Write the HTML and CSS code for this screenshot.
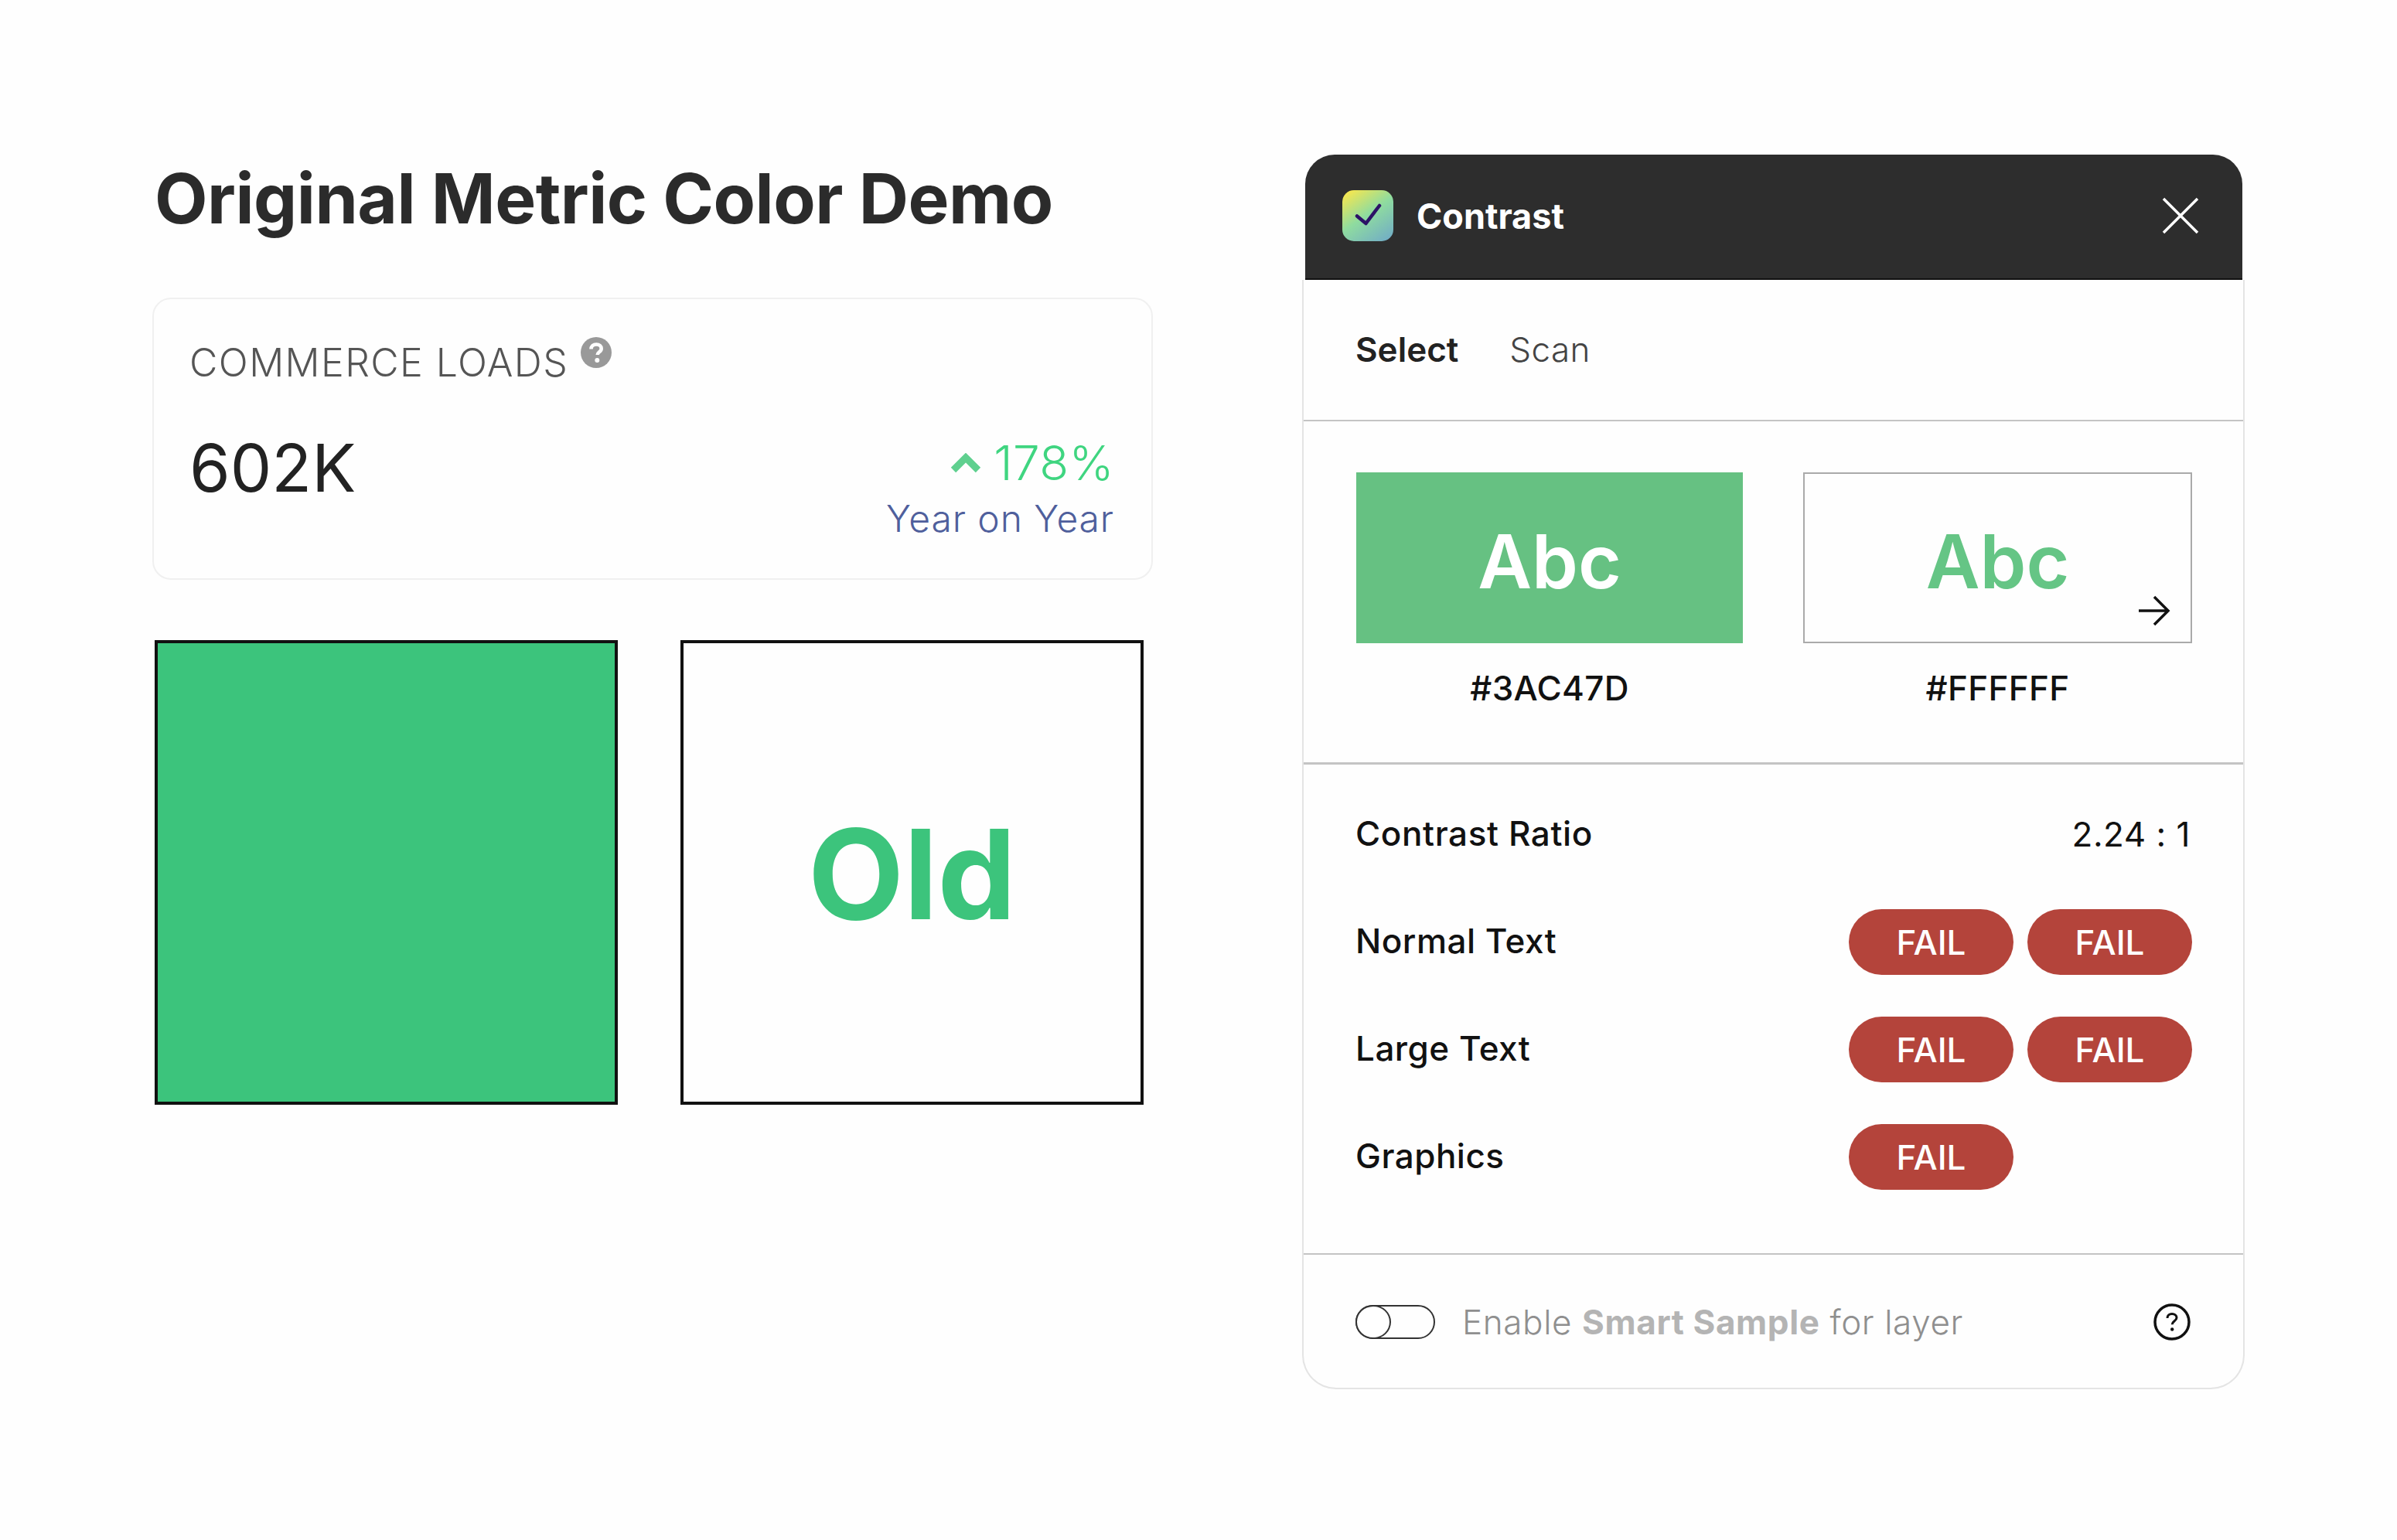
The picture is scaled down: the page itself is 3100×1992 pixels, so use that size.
FILE: index.html
```html
<!DOCTYPE html>
<html lang="en">
<head>
<meta charset="utf-8">
<title>Original Metric Color Demo</title>
<link rel="stylesheet" href="styles.css">
</head>
<body>
<main class="stage">
  <section class="demo">
    <h1 class="title">Original Metric Color Demo</h1>
    <article class="metric">
      <div class="metric-label">
        <span>COMMERCE LOADS</span>
        <svg class="metric-help" viewBox="0 0 40 40" aria-hidden="true"><circle cx="20" cy="20" r="20" fill="#999"/><path d="M13.5 15.5c0-3.800 3-6 6.700-6 3.900 0 6.500 2.200 6.500 5.400 0 4.400-5 4.300-5 8.100" fill="none" stroke="#fff" stroke-width="4.600"/><circle cx="21.300" cy="30" r="3" fill="#fff"/></svg>
      </div>
      <div class="metric-row">
        <div class="metric-value">602K</div>
        <div class="metric-trend">
          <div class="trend-up">
            <svg class="chevron" viewBox="0 0 40 26" aria-hidden="true"><path d="M4 22 20 6l16 16" fill="none" stroke="#5fd08f" stroke-width="9"/></svg>
            <span>178%</span>
          </div>
          <div class="trend-note">Year on Year</div>
        </div>
      </div>
    </article>
    <div class="boxes">
      <div class="box box-fill"></div>
      <div class="box box-text">Old</div>
    </div>
  </section>

  <section class="panel">
    <header class="panel-head">
      <div class="brand">
        <span class="logo"><svg viewBox="0 0 66 66" aria-hidden="true"><path d="M19 33.500 30.500 43 48 20" fill="none" stroke="#2c1266" stroke-width="4.500" stroke-linecap="round" stroke-linejoin="round"/></svg></span>
        <span class="brand-name">Contrast</span>
      </div>
      <svg class="close" viewBox="0 0 48 48" aria-hidden="true"><path d="M2 2 46 46M46 2 2 46" fill="none" stroke="#fff" stroke-width="3.500"/></svg>
    </header>
    <div class="panel-body">
      <nav class="tabs">
        <span class="tab tab-active">Select</span>
        <span class="tab">Scan</span>
      </nav>
      <div class="swatches">
        <figure class="swatch">
          <div class="chip chip-fg">Abc</div>
          <figcaption class="hex">#3AC47D</figcaption>
        </figure>
        <figure class="swatch swatch-bg">
          <div class="chip chip-bg">Abc
            <svg class="arrow" viewBox="0 0 42 40" aria-hidden="true"><path d="M1 20H39M21 2l18 18-18 18" fill="none" stroke="#111" stroke-width="3.500"/></svg>
          </div>
          <figcaption class="hex">#FFFFFF</figcaption>
        </figure>
      </div>
      <div class="results">
        <div class="result result-ratio"><span class="result-name">Contrast Ratio</span><span class="ratio">2.24 : 1</span></div>
        <div class="result"><span class="result-name">Normal Text</span><div class="pills"><span class="pill">FAIL</span><span class="pill">FAIL</span></div></div>
        <div class="result"><span class="result-name">Large Text</span><div class="pills"><span class="pill">FAIL</span><span class="pill">FAIL</span></div></div>
        <div class="result"><span class="result-name">Graphics</span><div class="pills"><span class="pill">FAIL</span></div></div>
      </div>
      <footer class="smart">
        <span class="toggle"><span class="knob"></span></span>
        <span class="smart-text">Enable <b>Smart Sample</b> for layer</span>
        <svg class="help" viewBox="0 0 48 48" aria-hidden="true"><circle cx="24" cy="24" r="22" fill="none" stroke="#111" stroke-width="3.500"/><path d="M18 19c0-3.500 2.600-5.500 6-5.500s6 2 6 5c0 4.200-5.800 4.300-5.800 8.700" fill="none" stroke="#111" stroke-width="3"/><circle cx="24.200" cy="33.500" r="2.200" fill="#111"/></svg>
      </footer>
    </div>
  </section>
</main>
</body>
</html>
```

FILE: styles.css
```css
* { box-sizing: border-box; }
html, body { margin: 0; height: 100%; }
body { background: #fefefe; font-family: Inter, "Liberation Sans", sans-serif; color: #111; }

.stage {
  width: 3100px;
  height: 1992px;
  padding: 200px 197px 0 198px;
  display: flex;
  justify-content: space-between;
  align-items: flex-start;
}

.demo { width: 1293px; }
.title {
  margin: 0;
  height: 185px;
  padding: 1px 0 0 2px;
  font-size: 89px;
  line-height: 112px;
  font-weight: 700;
  letter-spacing: -0.5px;
  color: #2b2b2b;
}

.metric {
  height: 365px;
  margin-left: -1px;
  border: 2px solid #f0f0f0;
  border-radius: 24px;
  padding: 52px 48px 0 46px;
}
.metric-label {
  display: flex;
  align-items: flex-start;
  gap: 16px;
  height: 112px;
  font-size: 50px;
  font-weight: 300;
  line-height: 60px;
  letter-spacing: 1.4px;
  color: #555;
}
.metric-help { width: 40px; height: 40px; flex: none; margin-top: -3px; }
.metric-row { display: flex; justify-content: space-between; align-items: flex-start; }
.metric-value {
  font-size: 85px;
  font-weight: 400;
  line-height: 110px;
  color: #222;
}
.metric-trend { display: flex; flex-direction: column; align-items: flex-end; margin-top: 10px; }
.trend-up {
  display: flex;
  align-items: center;
  gap: 16px;
  font-size: 62px;
  font-weight: 300;
  line-height: 76px;
  letter-spacing: 0.4px;
  color: #3fd580;
}
.chevron { width: 40px; height: 26px; }
.trend-note {
  margin-top: 4px;
  font-size: 48px;
  font-weight: 300;
  line-height: 60px;
  letter-spacing: 0.9px;
  color: #4f5f9c;
}

.boxes { display: flex; gap: 81px; margin: 78px 0 0 2px; }
.box { width: 599px; height: 601px; border: 4px solid #111; }
.box-fill { background: #3cc47c; }
.box-text {
  display: flex;
  align-items: center;
  justify-content: center;
  background: #fefefe;
  padding-top: 4px;
  font-size: 161px;
  font-weight: 700;
  color: #3cc47c;
}

.panel { width: 1219px; display: flex; flex-direction: column; }
.panel-head {
  height: 162px;
  margin: 0 3px 0 4px;
  background: #2d2d2d;
  border-radius: 38px 38px 0 0;
  border-bottom: 2px solid #111;
  padding: 0 56px 2px 48px;
  display: flex;
  align-items: center;
  justify-content: space-between;
}
.brand { display: flex; align-items: center; gap: 30px; }
.logo {
  width: 66px;
  height: 66px;
  border-radius: 15px;
  background: linear-gradient(145deg, #f1e653 8%, #8fdc9f 48%, #6fa9c9 100%);
  display: block;
}
.logo svg { display: block; width: 66px; height: 66px; }
.brand-name { font-size: 45px; font-weight: 700; color: #fff; }
.close { width: 48px; height: 48px; }

.panel-body {
  height: 1435px;
  border: 2px solid #e4e4e4;
  border-top: 0;
  border-radius: 0 0 44px 44px;
  background: #fefefe;
}
.tabs {
  height: 183px;
  padding: 0 0 2px 67px;
  display: flex;
  align-items: center;
  gap: 66px;
  border-bottom: 2px solid #c4c4c4;
}
.tab { font-size: 44px; font-weight: 300; letter-spacing: 0.4px; color: #444; }
.tab-active { font-weight: 600; color: #222; letter-spacing: 0; }

.swatches {
  height: 444px;
  padding: 66px 66px 0 68px;
  display: flex;
  justify-content: space-between;
  border-bottom: 3px solid #c4c4c4;
}
.swatch { margin: 0; width: 500px; }
.swatch-bg { width: 503px; }
.chip {
  height: 221px;
  padding-top: 9px;
  display: flex;
  align-items: center;
  justify-content: center;
  font-size: 96px;
  font-weight: 600;
}
.chip-fg { background: #66c182; color: #fff; }
.chip-bg { position: relative; border: 2px solid #aaa; color: #65c585; }
.arrow { position: absolute; right: 26px; bottom: 20px; width: 42px; height: 40px; }
.hex { margin-top: 30px; text-align: center; font-size: 44px; font-weight: 500; line-height: 56px; letter-spacing: 0.3px; }

.results {
  height: 634px;
  padding: 20px 66px 0 67px;
  border-bottom: 2px solid #c4c4c4;
}
.result {
  height: 139px;
  display: flex;
  align-items: center;
  justify-content: space-between;
  font-size: 44px;
  font-weight: 500;
}
.result-ratio { height: 140px; }
.result-name { padding-bottom: 4px; letter-spacing: 0.5px; }
.result-ratio .result-name { padding-bottom: 2px; letter-spacing: 0.6px; }
.ratio { font-weight: 400; margin-right: 2px; letter-spacing: 0.5px; }
.pills { display: flex; gap: 18px; width: 444px; }
.pill {
  width: 213px;
  height: 85px;
  border-radius: 43px;
  background: #b4443b;
  color: #fff;
  font-weight: 500;
  display: flex;
  align-items: center;
  justify-content: center;
}

.smart {
  height: 174px;
  padding: 0 68px 0 67px;
  display: flex;
  align-items: center;
  font-size: 44px;
  font-weight: 300;
  letter-spacing: 0.6px;
  color: #8f8f8f;
}
.toggle {
  width: 103px;
  height: 44px;
  border: 2px solid #333;
  border-radius: 22px;
  margin-right: 35px;
  display: block;
}
.knob {
  display: block;
  width: 46px;
  height: 44px;
  margin: -2px 0 0 -2px;
  border: 2px solid #333;
  border-radius: 50%;
  background: #fff;
}
.smart-text { flex: 1; }
.smart-text b { font-weight: 700; color: #b4b4b4; }
.help { width: 48px; height: 48px; }
```
